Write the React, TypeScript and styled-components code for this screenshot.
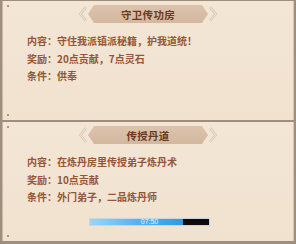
import React from 'react';
import styled, { createGlobalStyle } from 'styled-components';

const GlobalStyle = createGlobalStyle`
	html, body {
		margin: 0;
		padding: 0;
		background: #a19281;
	}
	body {
		font-family: "Noto Sans CJK SC", "Noto Sans", sans-serif;
	}
`;

const Page = styled.div`
	width: 296px;
	height: 244px;
	box-sizing: border-box;
	display: flex;
	flex-direction: column;
	gap: 2px;
	padding: 1px 2px 2px 2px;
	background: #9d8e7e;
	overflow: hidden;
`;

const Card = styled.div`
	position: relative;
	height: 119px;
	flex-shrink: 0;
	box-sizing: border-box;
	padding-top: 4px;
	background: linear-gradient(180deg, #f3e6d5 0%, #f1e2cf 100%);
	border-left: 1px solid #c9b8a5;
	border-right: 1px solid #d6c5b2;
	display: flex;
	flex-direction: column;

	&::before,
	&::after {
		content: "";
		position: absolute;
		left: 4px;
		width: 2px;
		height: 2px;
		background: #a89888;
	}
	&::before {
		top: 4px;
	}
	&::after {
		bottom: 4px;
	}
`;

const BannerRow = styled.div`
	display: flex;
	align-items: center;
	justify-content: center;
	height: 18px;
	gap: 1px;
`;

const Plate = styled.div`
	width: 120px;
	height: 18px;
	display: flex;
	align-items: center;
	justify-content: center;
	background: linear-gradient(180deg, #dcc3ab 0%, #d3b89f 100%);
	clip-path: polygon(6px 0, calc(100% - 6px) 0, 100% 50%, calc(100% - 6px) 100%, 6px 100%, 0 50%);
	color: #6b3a22;
	font-size: 10.5px;
	font-weight: 700;
	letter-spacing: 0.3px;
`;

const List = styled.div`
	margin-top: 9px;
	padding-left: 24px;
	display: flex;
	flex-direction: column;
`;

const Line = styled.div`
	height: 17.5px;
	line-height: 17.5px;
	font-size: 10px;
	font-weight: 700;
	color: #955637;
	white-space: nowrap;
`;

const BarWrap = styled.div`
	margin-top: 12px;
	display: flex;
	justify-content: center;
	padding-left: 3px;
`;

const Bar = styled.div`
	position: relative;
	width: 121px;
	height: 8px;
	box-sizing: border-box;
	background: #0b0b10;
	border: 1px solid #c9d6de;
	display: flex;
`;

const Fill = styled.div`
	height: 100%;
	background: linear-gradient(90deg, #9ad6f6 0%, #55b4ef 50%, #2d9ae6 100%);
`;

const BarText = styled.span`
	position: absolute;
	inset: 0;
	display: flex;
	align-items: center;
	justify-content: center;
	color: #f0f8ff;
	font-family: "Liberation Sans", Arial, sans-serif;
	font-size: 7px;
	line-height: 1;
`;

const Chevron = ({ flip }: { flip?: boolean }) => (
	<svg width="8" height="16" viewBox="0 0 8 16" style={flip ? { transform: 'scaleX(-1)' } : undefined}>
		<polyline points="7,1 1.5,8 7,15" fill="none" stroke="#d6c4b2" strokeWidth="2.6" />
		<polyline points="7,1 1.5,8 7,15" fill="none" stroke="#efe4d7" strokeWidth="1.2" />
	</svg>
);

const Banner = ({ title }: { title: string }) => (
	<BannerRow>
		<Chevron />
		<Plate>{title}</Plate>
		<Chevron flip />
	</BannerRow>
);

type Task = {
	title: string;
	content: string;
	reward: string;
	cond: string;
	progress?: { pct: number; label: string };
};

const tasks: Task[] = [
	{
		title: '守卫传功房',
		content: '守住我派镇派秘籍，护我道统！',
		reward: '20点贡献，7点灵石',
		cond: '供奉',
	},
	{
		title: '传授丹道',
		content: '在炼丹房里传授弟子炼丹术',
		reward: '10点贡献',
		cond: '外门弟子，二品炼丹师',
		progress: { pct: 78, label: '07:50' },
	},
];

const App = () => {
	return (
		<>
			<GlobalStyle />
			<Page>
				{tasks.map(t => (
					<Card key={t.title}>
						<Banner title={t.title} />
						<List>
							<Line>内容：{t.content}</Line>
							<Line>奖励：{t.reward}</Line>
							<Line>条件：{t.cond}</Line>
						</List>
						{t.progress && (
							<BarWrap>
								<Bar>
									<Fill style={{ width: `${t.progress.pct}%` }} />
									<BarText>{t.progress.label}</BarText>
								</Bar>
							</BarWrap>
						)}
					</Card>
				))}
			</Page>
		</>
	);
};

export default App;
